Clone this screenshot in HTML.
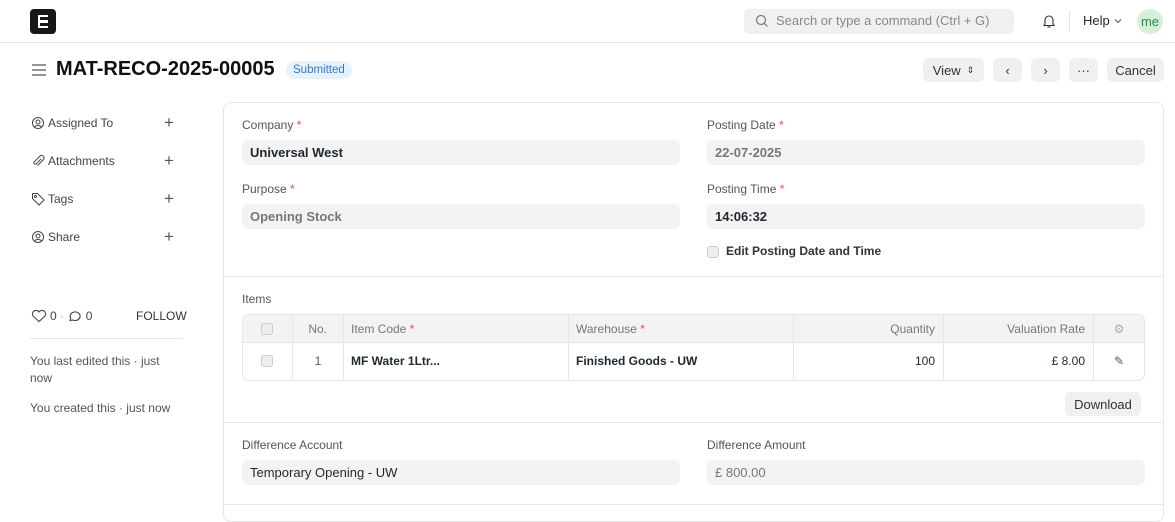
<!DOCTYPE html>
<html><head><meta charset="utf-8"><style>
*{box-sizing:border-box;margin:0;padding:0}
body{width:1175px;height:507px;overflow:hidden;background:#fff;font-family:"Liberation Sans",sans-serif;font-size:13px;color:#1f272e;position:relative}
.a{position:absolute}
.nav{left:0;top:0;width:1175px;height:43px;border-bottom:1px solid #e8e8e8}
.btn{background:#f0f0f0;border-radius:6px;height:24px;top:58px;font-size:13px;display:flex;align-items:center;justify-content:center;color:#333}
.lbl{font-size:12px;color:#555}
.lbl b{color:#e24c4c;font-weight:normal}
.inp{background:#f3f3f3;border-radius:6px;height:25px;padding-left:8px;display:flex;align-items:center;font-size:13px}
.side{left:31px;font-size:12px;color:#444;display:flex;align-items:center;gap:3px}
.plus{left:164px;font-size:17px;color:#555;font-weight:300}
.th{top:315px;height:28px;display:flex;align-items:center;font-size:12px;color:#777;border-right:1px solid #e6e6e6}
.td{top:343px;height:36px;display:flex;align-items:center;font-size:12px;border-right:1px solid #e6e6e6}
.cb{width:12px;height:12px;border:1px solid #ccc;border-radius:3px;background:#eee}
</style></head><body>
<div class="a nav"></div>
<div class="a" style="left:30px;top:9px;width:26px;height:25px;background:#171717;border-radius:4px"></div>
<div class="a" style="left:38px;top:15px;width:10px;height:13px;border:2.5px solid #fff;border-right:none"></div>
<div class="a" style="left:40px;top:20px;width:8px;height:2.5px;background:#fff"></div>
<div class="a" style="left:744px;top:9px;width:270px;height:25px;background:#f0f0f0;border-radius:6px"></div>
<svg class="a" style="left:755px;top:14px" width="14" height="14" viewBox="0 0 14 14" fill="none" stroke="#777" stroke-width="1.2"><circle cx="6" cy="6" r="4.5"/><path d="M9.5 9.5l3 3"/></svg>
<div class="a" style="left:776px;top:13px;color:#888;font-size:13px">Search or type a command (Ctrl + G)</div>
<svg class="a" style="left:1041px;top:13px" width="16" height="16" viewBox="0 0 16 16" fill="none" stroke="#333" stroke-width="1.1"><path d="M4 11V7a4 4 0 018 0v4l1 1.5H3z"/><path d="M6.5 14h3"/></svg>
<div class="a" style="left:1069px;top:10px;width:1px;height:22px;background:#e2e2e2"></div>
<div class="a" style="left:1083px;top:13px;font-size:13px">Help</div>
<svg class="a" style="left:1114px;top:18px" width="8" height="6" viewBox="0 0 8 6" fill="none" stroke="#555" stroke-width="1"><path d="M1 1.5l3 3 3-3"/></svg>
<div class="a" style="left:1137px;top:9px;width:26px;height:25px;border-radius:50%;background:#d5efd9;color:#2f8a45;font-size:13px;display:flex;align-items:center;justify-content:center">me</div>

<svg class="a" style="left:32px;top:63px" width="14" height="14" viewBox="0 0 14 14" stroke="#555" stroke-width="1.2"><path d="M0 2h14M0 7h14M0 12h14"/></svg>
<div class="a" style="left:56px;top:58px;font-size:20px;font-weight:bold;color:#111">MAT-RECO-2025-00005</div>
<div class="a" style="left:286px;top:61px;height:18px;padding:0 7px;border-radius:9px;background:#e8f2fd;color:#3478c5;font-size:11.5px;line-height:18px">Submitted</div>
<div class="a btn" style="left:923px;width:61px">View <span style="font-size:9px;margin-left:6px">&#8661;</span></div>
<div class="a btn" style="left:993px;width:29px">&#8249;</div>
<div class="a btn" style="left:1031px;width:29px">&#8250;</div>
<div class="a btn" style="left:1069px;width:29px">&middot;&middot;&middot;</div>
<div class="a btn" style="left:1107px;width:57px">Cancel</div>

<svg width="0" height="0" style="position:absolute"><defs>
<g id="usr" fill="none" stroke="#444" stroke-width="1"><circle cx="7" cy="7" r="5.5"/><circle cx="7" cy="6" r="2"/><path d="M3.5 11c1-2 6-2 7 0"/></g></defs></svg>
<div class="a side" style="top:116px"><svg width="14" height="14"><use href="#usr"/></svg>Assigned To</div><div class="a plus" style="top:113px">+</div>
<div class="a side" style="top:154px"><svg width="14" height="14" viewBox="0 0 14 14" fill="none" stroke="#444" stroke-width="1"><path d="M10 5l-5 5a1.5 1.5 0 01-2-2l6-6a2.5 2.5 0 013.5 3.5l-6 6"/></svg>Attachments</div><div class="a plus" style="top:151px">+</div>
<div class="a side" style="top:192px"><svg width="14" height="14" viewBox="0 0 14 14" fill="none" stroke="#444" stroke-width="1"><path d="M1.5 2v4.5l6.5 6.5 5-5-6.5-6.5H2z"/><circle cx="4.5" cy="4.5" r="1"/></svg>Tags</div><div class="a plus" style="top:189px">+</div>
<div class="a side" style="top:230px"><svg width="14" height="14"><use href="#usr"/></svg>Share</div><div class="a plus" style="top:227px">+</div>
<div class="a side" style="top:309px"><svg width="16" height="14" viewBox="0 0 16 14" fill="none" stroke="#444" stroke-width="1.1"><path d="M8 12.5L2 7a3.3 3.3 0 016-4 3.3 3.3 0 016 4z"/></svg> 0 <span style="color:#aaa">·</span> <svg width="16" height="14" viewBox="0 0 16 14" fill="none" stroke="#444" stroke-width="1.1"><path d="M3 11.5l.7-2.3A5 4.3 0 118 11.5a5.5 5 0 01-2.3-.5z"/></svg> 0</div>
<div class="a" style="left:136px;top:309px;font-size:12px;color:#333">FOLLOW</div>
<div class="a" style="left:30px;top:338px;width:153px;height:1px;background:#e6e6e6"></div>
<div class="a" style="left:30px;top:353px;font-size:12px;color:#555;line-height:17px;width:145px">You last edited this · just now</div>
<div class="a" style="left:30px;top:401px;font-size:12px;color:#555">You created this · just now</div>

<div class="a" style="left:223px;top:102px;width:941px;height:420px;border:1px solid #e6e6e6;border-radius:8px"></div>
<div class="a" style="left:224px;top:276px;width:939px;height:1px;background:#e6e6e6"></div>
<div class="a" style="left:224px;top:422px;width:939px;height:1px;background:#e6e6e6"></div>
<div class="a" style="left:224px;top:504px;width:939px;height:1px;background:#e6e6e6"></div>

<div class="a lbl" style="left:242px;top:118px">Company <b>*</b></div>
<div class="a inp" style="left:242px;top:140px;width:438px;font-weight:bold">Universal West</div>
<div class="a lbl" style="left:242px;top:182px">Purpose <b>*</b></div>
<div class="a inp" style="left:242px;top:204px;width:438px;font-weight:bold;color:#777">Opening Stock</div>
<div class="a lbl" style="left:707px;top:118px">Posting Date <b>*</b></div>
<div class="a inp" style="left:707px;top:140px;width:438px;font-weight:bold;color:#777">22-07-2025</div>
<div class="a lbl" style="left:707px;top:182px">Posting Time <b>*</b></div>
<div class="a inp" style="left:707px;top:204px;width:438px;font-weight:bold">14:06:32</div>
<div class="a cb" style="left:707px;top:246px"></div>
<div class="a" style="left:726px;top:244px;font-size:12px;font-weight:bold;color:#333">Edit Posting Date and Time</div>

<div class="a lbl" style="left:242px;top:292px">Items</div>
<div class="a" style="left:242px;top:314px;width:903px;height:67px;border:1px solid #e6e6e6;border-radius:7px;overflow:hidden"><div style="height:28px;background:#f3f3f3;border-bottom:1px solid #e6e6e6"></div></div>
<div class="a th" style="left:242px;width:51px;justify-content:center"><div class="cb"></div></div>
<div class="a th" style="left:293px;width:51px;justify-content:flex-end;padding-right:16px">No.</div>
<div class="a th" style="left:344px;width:225px;padding-left:7px">Item Code&nbsp;<span style="color:#e24c4c">*</span></div>
<div class="a th" style="left:569px;width:225px;padding-left:7px">Warehouse&nbsp;<span style="color:#e24c4c">*</span></div>
<div class="a th" style="left:794px;width:150px;justify-content:flex-end;padding-right:8px">Quantity</div>
<div class="a th" style="left:944px;width:150px;justify-content:flex-end;padding-right:8px">Valuation Rate</div>
<div class="a th" style="left:1094px;width:50px;justify-content:center;border:none;color:#aaa">&#9881;</div>
<div class="a td" style="left:242px;width:51px;justify-content:center"><div class="cb"></div></div>
<div class="a td" style="left:293px;width:51px;justify-content:center;color:#555">1</div>
<div class="a td" style="left:344px;width:225px;padding-left:7px;font-weight:bold">MF Water 1Ltr...</div>
<div class="a td" style="left:569px;width:225px;padding-left:7px;font-weight:bold">Finished Goods - UW</div>
<div class="a td" style="left:794px;width:150px;justify-content:flex-end;padding-right:8px">100</div>
<div class="a td" style="left:944px;width:150px;justify-content:flex-end;padding-right:8px">£ 8.00</div>
<div class="a td" style="left:1094px;width:50px;justify-content:center;border:none;color:#555">&#9998;</div>
<div class="a btn" style="left:1065px;top:392px;width:76px">Download</div>

<div class="a lbl" style="left:242px;top:438px">Difference Account</div>
<div class="a inp" style="left:242px;top:460px;width:438px">Temporary Opening - UW</div>
<div class="a lbl" style="left:707px;top:438px">Difference Amount</div>
<div class="a inp" style="left:707px;top:460px;width:438px;color:#777">£ 800.00</div>
</body></html>
